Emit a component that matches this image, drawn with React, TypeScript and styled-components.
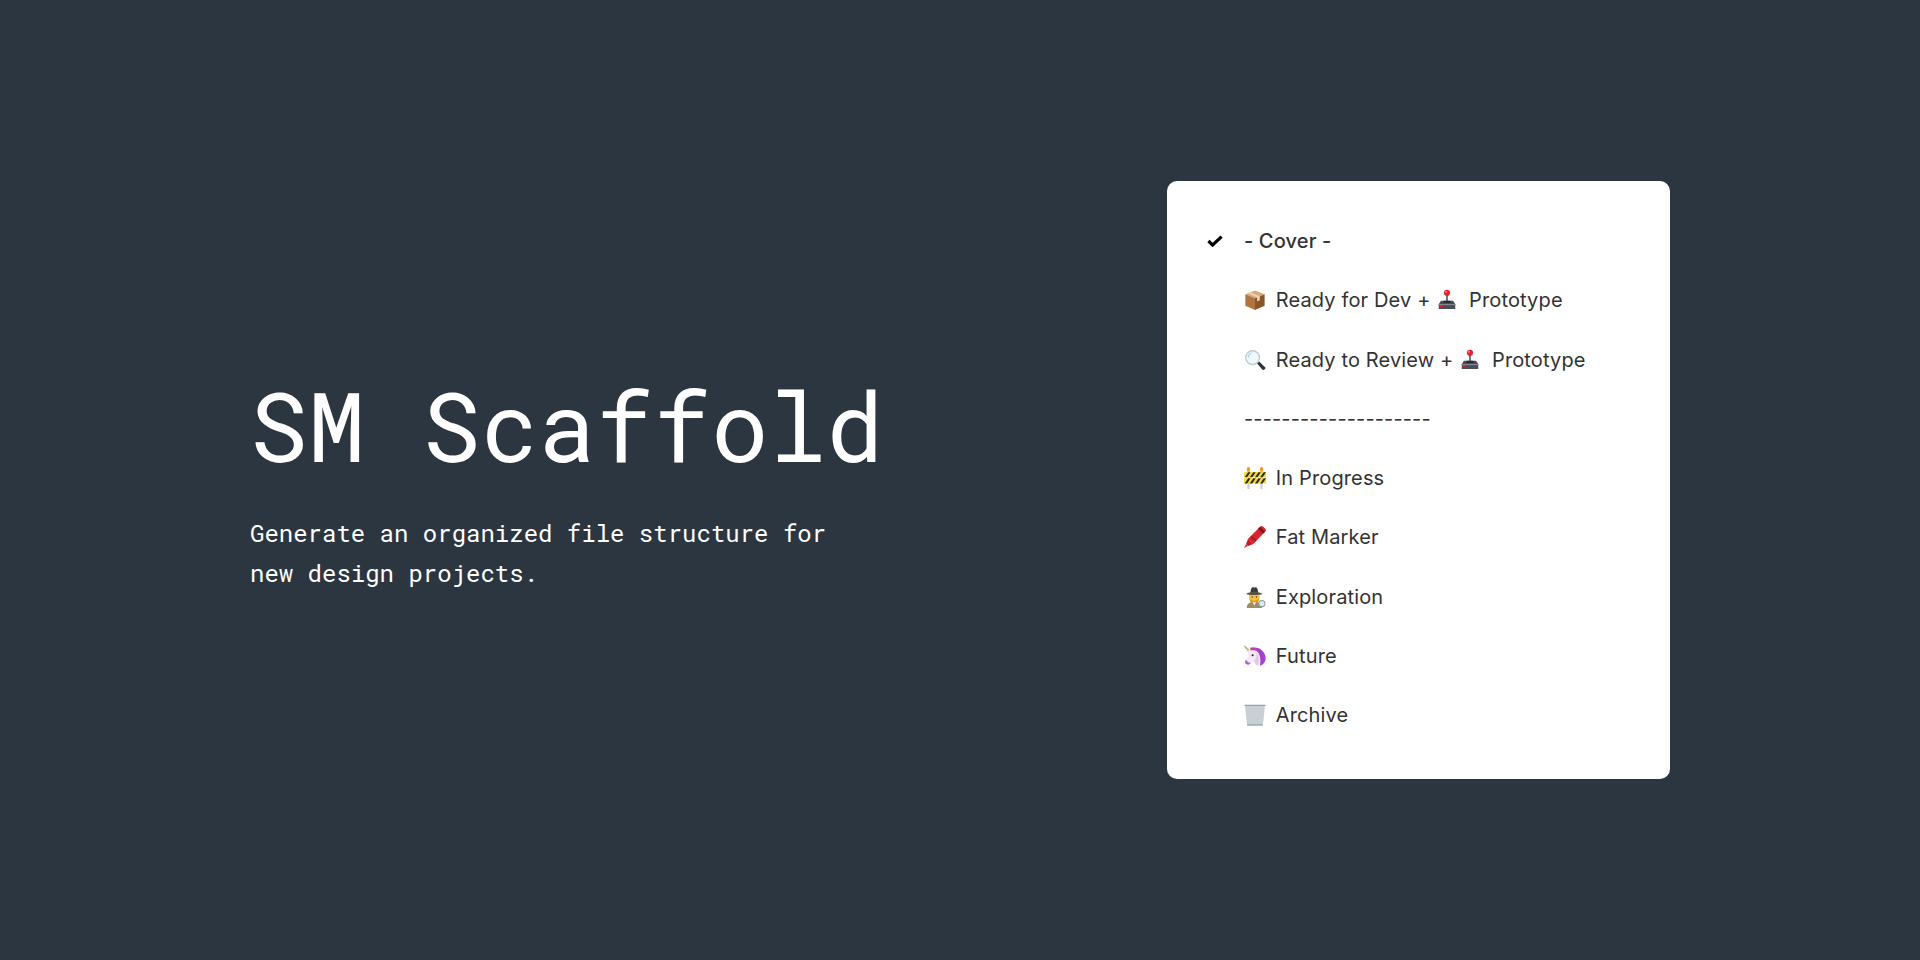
import React from "react";
import styled, { createGlobalStyle } from "styled-components";

const GlobalStyle = createGlobalStyle`
  html, body {
    margin: 0;
    padding: 0;
    background: #2c3640;
  }
`;

const Page = styled.main`
  width: 1920px;
  height: 960px;
  padding: 0 250px;
  box-sizing: border-box;
  display: flex;
  align-items: center;
  justify-content: space-between;
  background: #2c3640;
`;

const Intro = styled.section`
  width: 600px;
  padding-top: 2px;
  color: #fff;
  font-family: "Roboto Mono", "Liberation Mono", monospace;
`;

const Title = styled.h1`
  margin: 0 0 32px;
  font-size: 96px;
  line-height: 112px;
  font-weight: 400;
  white-space: nowrap;
`;

const Blurb = styled.p`
  margin: 0;
  font-size: 24px;
  line-height: 40px;
`;

const Menu = styled.ul`
  width: 503px;
  height: 598px;
  margin: 0;
  padding: 30.4px 0 0 40px;
  box-sizing: border-box;
  list-style: none;
  background: #fff;
  border-radius: 10px;
  font-family: Inter, "Liberation Sans", sans-serif;
  font-size: 20px;
  letter-spacing: 0.14px;
  color: #333;
`;

const Row = styled.li<{ $active?: boolean }>`
  height: 59.25px;
  display: flex;
  align-items: center;
  white-space: pre;
  font-weight: ${(p) => (p.$active ? 500 : 400)};
`;

const CheckSlot = styled.span`
  width: 37px;
  display: flex;
  align-items: center;
  flex: none;
`;

const Emoji = styled.span<{ $wide?: boolean }>`
  display: inline-flex;
  width: ${(p) => (p.$wide ? 27 : 26)}px;
  height: 22px;
  vertical-align: -4px;
`;

const Glyph = styled.svg`
  width: 22px;
  height: 22px;
  display: block;
`;

const Check = () => (
  <svg width="16" height="12" viewBox="0 0 16 12">
    <path d="M1.4 6 5.6 10 14.6 1.6" fill="none" stroke="#000" strokeWidth="3.2" />
  </svg>
);

const PackageIcon = () => (
  <Glyph viewBox="0 0 64 64">
    <path d="M32 4 60 15 32 27 4 15Z" fill="#d9a878" />
    <path d="M4 15 32 27V61L4 49Z" fill="#b0743f" />
    <path d="M60 15 32 27V61L60 49Z" fill="#8a5527" />
    <path d="M18 9.5 46 21 46 33 38 36V24.5L11 12.5Z" fill="#e8d3b8" />
  </Glyph>
);

const JoystickIcon = () => (
  <Glyph viewBox="0 0 64 64">
    <rect x="29" y="18" width="6" height="22" fill="#777" />
    <circle cx="32" cy="11" r="9" fill="#e8232f" />
    <circle cx="29" cy="8" r="2.5" fill="#ffb3b3" />
    <path d="M14 34H50L56 44V58H8V44Z" fill="#4a4d55" />
    <path d="M8 44H56V47H8Z" fill="#8c9098" />
    <rect x="21" y="34" width="22" height="7" rx="3" fill="#2a2c31" />
    <rect x="11" y="47" width="9" height="5" rx="2" fill="#e8232f" />
  </Glyph>
);

const MagnifierIcon = () => (
  <Glyph viewBox="0 0 64 64">
    <path d="M38 42 44 36 62 54C64 57 58 63 54 60Z" fill="#2f3238" />
    <circle cx="25" cy="25" r="22" fill="#bccbd4" />
    <circle cx="25" cy="25" r="18" fill="#f0f7fb" />
    <path d="M11 24C12 15 18 10 26 9 18 14 15 19 14 27Z" fill="#a9d4ee" />
  </Glyph>
);

const BarrierIcon = () => (
  <Glyph viewBox="0 0 64 64">
    <rect x="10" y="10" width="6" height="54" fill="#c9ccd0" />
    <rect x="48" y="10" width="6" height="54" fill="#c9ccd0" />
    <ellipse cx="13" cy="7" rx="5" ry="7" fill="#f39a1f" />
    <ellipse cx="51" cy="7" rx="5" ry="7" fill="#f39a1f" />
    <rect x="0" y="15" width="64" height="15" fill="#f8d92a" />
    <rect x="0" y="33" width="64" height="15" fill="#f8d92a" />
    <path
      d="M2 30 12 15H19L9 30ZM17 30 27 15H34L24 30ZM32 30 42 15H49L39 30ZM47 30 57 15H64L54 30ZM2 48 12 33H19L9 48ZM17 48 27 33H34L24 48ZM32 48 42 33H49L39 48ZM47 48 57 33H64L54 48Z"
      fill="#2b2a2a"
    />
  </Glyph>
);

const CrayonIcon = () => (
  <Glyph viewBox="0 0 64 64">
    <path d="M49 0C56 0 64 8 64 14L27 52 12 37Z" fill="#d8222c" />
    <path d="M46 3 61 17 56 22 41 8Z" fill="#7a1219" />
    <path d="M22 28 36 42 33 45 19 31Z" fill="#9a1922" />
    <path d="M12 37 27 52 12 58 6 52Z" fill="#c41a24" />
    <path d="M6 52 12 58 0 64Z" fill="#e8313a" />
  </Glyph>
);

const DetectiveIcon = () => (
  <Glyph viewBox="0 0 64 64">
    <path d="M8 64C8 51 18 46 30 46 42 46 52 51 52 64Z" fill="#a08d66" />
    <path d="M24 46 30 57 36 46Z" fill="#f4f1e6" />
    <circle cx="30" cy="31" r="16" fill="#f7c23c" />
    <path d="M15 36 26 43H34L45 36 41 47H19Z" fill="#dd9c1e" />
    <path d="M19 20C19 5 25 2 30 5 35 2 41 5 41 20Z" fill="#413c35" />
    <path d="M6 23C16 16 44 16 54 23 44 27 16 27 6 23Z" fill="#57514a" />
    <circle cx="24" cy="32" r="2" fill="#3a2a10" />
    <circle cx="36" cy="32" r="2" fill="#3a2a10" />
    <circle cx="52" cy="51" r="9" fill="#d6ecf7" stroke="#8b9aa5" strokeWidth="3" />
  </Glyph>
);

const UnicornIcon = () => (
  <Glyph viewBox="0 0 64 64">
    <path d="M0 1 19 15 12 21Z" fill="#e9b65a" />
    <path d="M0 1 9 8 5 12Z" fill="#69c7a8" />
    <path d="M24 8C44 4 63 20 63 38 63 50 56 58 46 60 50 48 46 32 38 24 32 20 27 14 24 8Z" fill="#a63fd2" />
    <path d="M16 12C30 8 44 20 47 36 49 46 46 54 40 60 32 58 30 52 28 46 22 50 16 58 9 57 2 55 1 47 6 42L14 32C10 26 11 16 16 12Z" fill="#f6e9f7" />
    <path d="M30 46C36 40 38 30 34 22 42 30 46 44 40 60 34 58 31 52 30 46Z" fill="#e3c4ec" />
    <path d="M6 43C1 48 2 55 9 57 13 58 17 55 20 52 14 52 9 49 6 43Z" fill="#b55fd9" />
    <circle cx="25" cy="30" r="3" fill="#2a2030" />
    <path d="M18 8C28 5 36 9 40 18 34 15 26 14 19 16Z" fill="#c8439f" />
  </Glyph>
);

const TrashIcon = () => (
  <Glyph viewBox="0 0 64 64">
    <defs>
      <pattern id="mesh" width="4" height="4" patternUnits="userSpaceOnUse">
        <path d="M0 0 4 4M4 0 0 4" stroke="#9fabb5" strokeWidth="1" />
      </pattern>
    </defs>
    <path d="M3 5H61L55 62H9Z" fill="#f2f4f6" />
    <path d="M3 5H61L55 62H9Z" fill="url(#mesh)" />
    <rect x="1" y="2" width="62" height="4" rx="1.5" fill="#96a2ac" />
    <rect x="9" y="58" width="46" height="5" rx="2" fill="#a4afb8" />
  </Glyph>
);

const App = () => (
  <>
    <GlobalStyle />
    <Page>
      <Intro>
        <Title>SM Scaffold</Title>
        <Blurb>
          Generate an organized file structure for
          <br />
          new design projects.
        </Blurb>
      </Intro>
      <Menu>
        <Row $active>
          <CheckSlot>
            <Check />
          </CheckSlot>
          - Cover -
        </Row>
        <Row>
          <CheckSlot />
          <span>
            <Emoji><PackageIcon /></Emoji> Ready for Dev + <Emoji $wide><JoystickIcon /></Emoji> Prototype
          </span>
        </Row>
        <Row>
          <CheckSlot />
          <span>
            <Emoji><MagnifierIcon /></Emoji> Ready to Review + <Emoji $wide><JoystickIcon /></Emoji> Prototype
          </span>
        </Row>
        <Row>
          <CheckSlot />
          --------------------
        </Row>
        <Row>
          <CheckSlot />
          <span>
            <Emoji><BarrierIcon /></Emoji> In Progress
          </span>
        </Row>
        <Row>
          <CheckSlot />
          <span>
            <Emoji><CrayonIcon /></Emoji> Fat Marker
          </span>
        </Row>
        <Row>
          <CheckSlot />
          <span>
            <Emoji><DetectiveIcon /></Emoji> Exploration
          </span>
        </Row>
        <Row>
          <CheckSlot />
          <span>
            <Emoji><UnicornIcon /></Emoji> Future
          </span>
        </Row>
        <Row>
          <CheckSlot />
          <span>
            <Emoji><TrashIcon /></Emoji> Archive
          </span>
        </Row>
      </Menu>
    </Page>
  </>
);

export default App;
